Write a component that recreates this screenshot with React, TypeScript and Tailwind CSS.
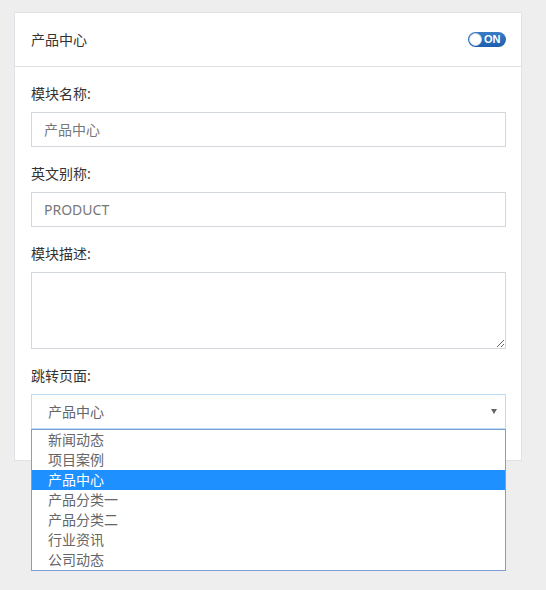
import React from "react";

const font = { fontFamily: '"Noto Sans", "Noto Sans CJK SC", sans-serif' };

const options = ["新闻动态", "项目案例", "产品中心", "产品分类一", "产品分类二", "行业资讯", "公司动态"];

function Toggle() {
  return (
    <div className="relative flex h-[15px] w-[38px] items-center rounded-full bg-gradient-to-b from-[#3a7bc8] to-[#1b5fae]">
      <div className="absolute left-[1px] top-[1px] h-[13px] w-[13px] rounded-full border border-[#c9d3de] bg-white" />
      <span className="absolute left-[16px] top-0 text-[11px] font-bold leading-[15px] text-white" style={{ fontFamily: '"Liberation Sans", Arial, sans-serif' }}>
        ON
      </span>
    </div>
  );
}

function Label({ children }: { children: React.ReactNode }) {
  return <div className="text-[14px] leading-[20px] text-[#333]">{children}</div>;
}

export default function App() {
  return (
    <div className="min-h-[590px] w-[546px] bg-[#eeeeee] pl-[14px] pt-[12px]" style={font}>
      <div className="h-[449px] w-[508px] border border-[#dfe2e7] bg-white">
        <div className="flex h-[54px] items-center justify-between border-b border-[#dfe2e7] pl-[16px] pr-[15px]">
          <span className="text-[14px] leading-[20px] text-[#333]">产品中心</span>
          <Toggle />
        </div>
        <div className="flex flex-col pl-[16px] pr-[15px] pt-[17px]">
          <Label>模块名称:</Label>
          <div className="mt-[8px] flex h-[35px] items-center border border-[#d3d7de] pl-[12px] text-[14px] text-[#777]">产品中心</div>
          <div className="mt-[17px]">
            <Label>英文别称:</Label>
          </div>
          <div className="mt-[8px] flex h-[35px] items-center border border-[#d3d7de] pl-[12px] text-[14px] text-[#777]">PRODUCT</div>
          <div className="mt-[17px]">
            <Label>模块描述:</Label>
          </div>
          <textarea
            className="mt-[8px] block h-[77px] w-full resize-y border border-[#d3d7de] outline-none"
            defaultValue=""
          />
          <div className="mt-[17px]">
            <Label>跳转页面:</Label>
          </div>
          <div className="relative mt-[8px]">
            <div className="flex h-[35px] items-center justify-between border border-[#bcdcf4] pl-[16px] pr-[8px] text-[14px] text-[#666]">
              <span>产品中心</span>
              <span className="h-0 w-0 border-x-[3px] border-t-[5px] border-x-transparent border-t-[#666]" />
            </div>
            <div className="absolute left-0 right-0 top-[35px] border border-[#7c9fd6] bg-white">
              {options.map((o, i) => (
                <div
                  key={o}
                  className={
                    i === 2
                      ? "h-[20px] bg-[#1e90ff] pl-[16px] text-[14px] leading-[20px] text-white"
                      : "h-[20px] pl-[16px] text-[14px] leading-[20px] text-[#666]"
                  }
                >
                  {o}
                </div>
              ))}
            </div>
          </div>
        </div>
      </div>
    </div>
  );
}
